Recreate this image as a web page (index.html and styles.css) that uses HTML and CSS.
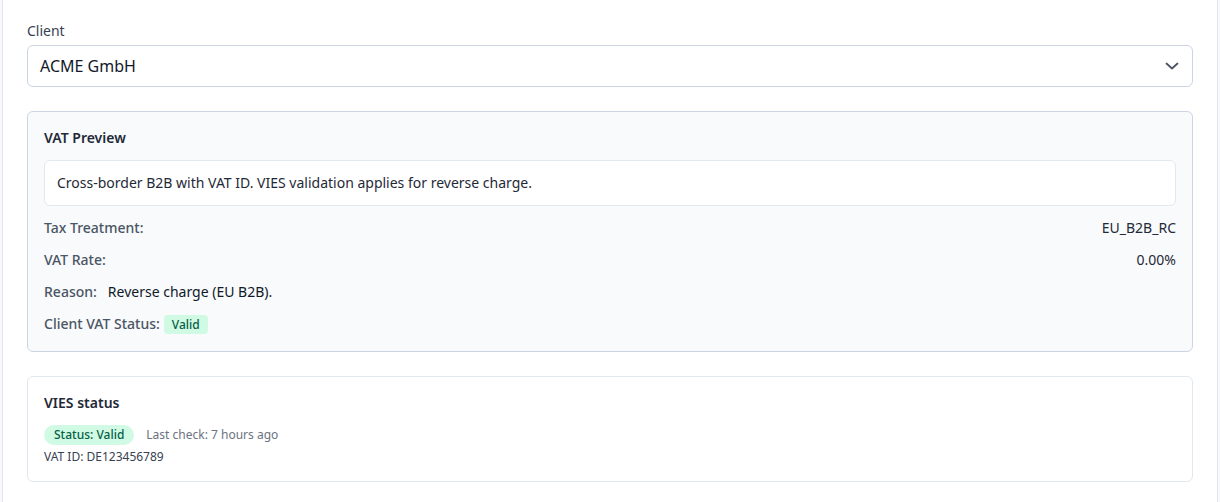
FILE: index.html
```html
<!DOCTYPE html>
<html lang="en">
<head>
<meta charset="utf-8">
<title>Invoice client</title>
<link rel="stylesheet" href="styles.css">
</head>
<body>
<div class="panel">
  <div class="field">
    <label class="field-label">Client</label>
    <div class="select">
      <span class="select-value">ACME GmbH</span>
      <svg class="chevron" width="16" height="16" viewBox="0 0 16 16" fill="none"><path d="M2.5 5.5L8 10.5l5.5-5" stroke="#4b5563" stroke-width="1.8" stroke-linecap="round" stroke-linejoin="round"/></svg>
    </div>
  </div>

  <section class="card card-preview">
    <h3 class="card-title">VAT Preview</h3>
    <div class="note">Cross-border B2B with VAT ID. VIES validation applies for reverse charge.</div>
    <div class="row row-split"><span class="label">Tax Treatment:</span><span class="value">EU_B2B_RC</span></div>
    <div class="row row-split"><span class="label">VAT Rate:</span><span class="value">0.00%</span></div>
    <div class="row row-reason"><span class="label">Reason:</span><span class="value">Reverse charge (EU B2B).</span></div>
    <div class="row row-status"><span class="label">Client VAT Status:</span><span class="tag">Valid</span></div>
  </section>

  <section class="card card-vies">
    <h3 class="card-title">VIES status</h3>
    <div class="vies-line"><span class="pill">Status: Valid</span><span class="muted">Last check: 7 hours ago</span></div>
    <div class="vat-id">VAT ID: DE123456789</div>
  </section>
</div>
</body>
</html>
```

FILE: styles.css
```css
* { box-sizing: border-box; }
html, body { margin: 0; padding: 0; }
body {
  background: #f8f9fb;
  font-family: "Noto Sans", "Open Sans", sans-serif;
  color: #1f2937;
  height: 502px;
  overflow: hidden;
}
.panel {
  margin: 0 2px;
  background: #ffffff;
  border-left: 1px solid #e2e6ec;
  border-right: 1px solid #e2e6ec;
  padding: 21px 24px 20px;
  min-height: 502px;
}
.field { display: flex; flex-direction: column; gap: 4px; }
.field-label {
  font-size: 14px;
  line-height: 20px;
  color: #374151;
}
.select {
  height: 42px;
  border: 1px solid #cbd5e1;
  border-radius: 6px;
  background: #fff;
  display: flex;
  align-items: center;
  justify-content: space-between;
  padding: 0 12px 0 12px;
}
.select-value { font-size: 16px; color: #111827; line-height: 24px; }
.chevron { display: block; }
.card {
  margin-top: 24px;
  border-radius: 6px;
  padding: 16px;
  display: flex;
  flex-direction: column;
}
.card-preview {
  background: #f8fafc;
  border: 1px solid #cbd5e1;
  gap: 12px;
  padding-bottom: 17px;
}
.card-vies {
  background: #ffffff;
  border: 1px solid #e2e8f0;
}
.card-title {
  margin: 0;
  font-size: 14px;
  line-height: 20px;
  font-weight: 600;
  color: #1f2937;
}
.note {
  background: #ffffff;
  border: 1px solid #e2e8f0;
  border-radius: 6px;
  padding: 12px;
  font-size: 14px;
  line-height: 20px;
  color: #1f2937;
}
.row {
  display: flex;
  align-items: center;
  font-size: 14px;
  line-height: 20px;
}
.row-split { justify-content: space-between; }
.label { color: #4b5563; font-weight: 500; }
.value { color: #1f2937; }
.row-reason { gap: 11px; }
.row-reason .value { color: #111827; }
.row-status { gap: 4px; }
.tag {
  display: inline-block;
  background: #d1fae5;
  color: #065f46;
  font-size: 12px;
  line-height: 19px;
  padding: 0 8px;
  border-radius: 4px;
  font-weight: 500;
}
.vies-line {
  margin-top: 12px;
  display: flex;
  align-items: center;
  gap: 12px;
}
.pill {
  background: #d1fae5;
  color: #065f46;
  font-size: 12px;
  line-height: 20px;
  padding: 0 10px;
  border-radius: 999px;
  font-weight: 500;
}
.muted { font-size: 12px; line-height: 16px; color: #6b7280; }
.vat-id {
  margin-top: 4px;
  font-size: 12px;
  line-height: 16px;
  color: #374151;
}
```
